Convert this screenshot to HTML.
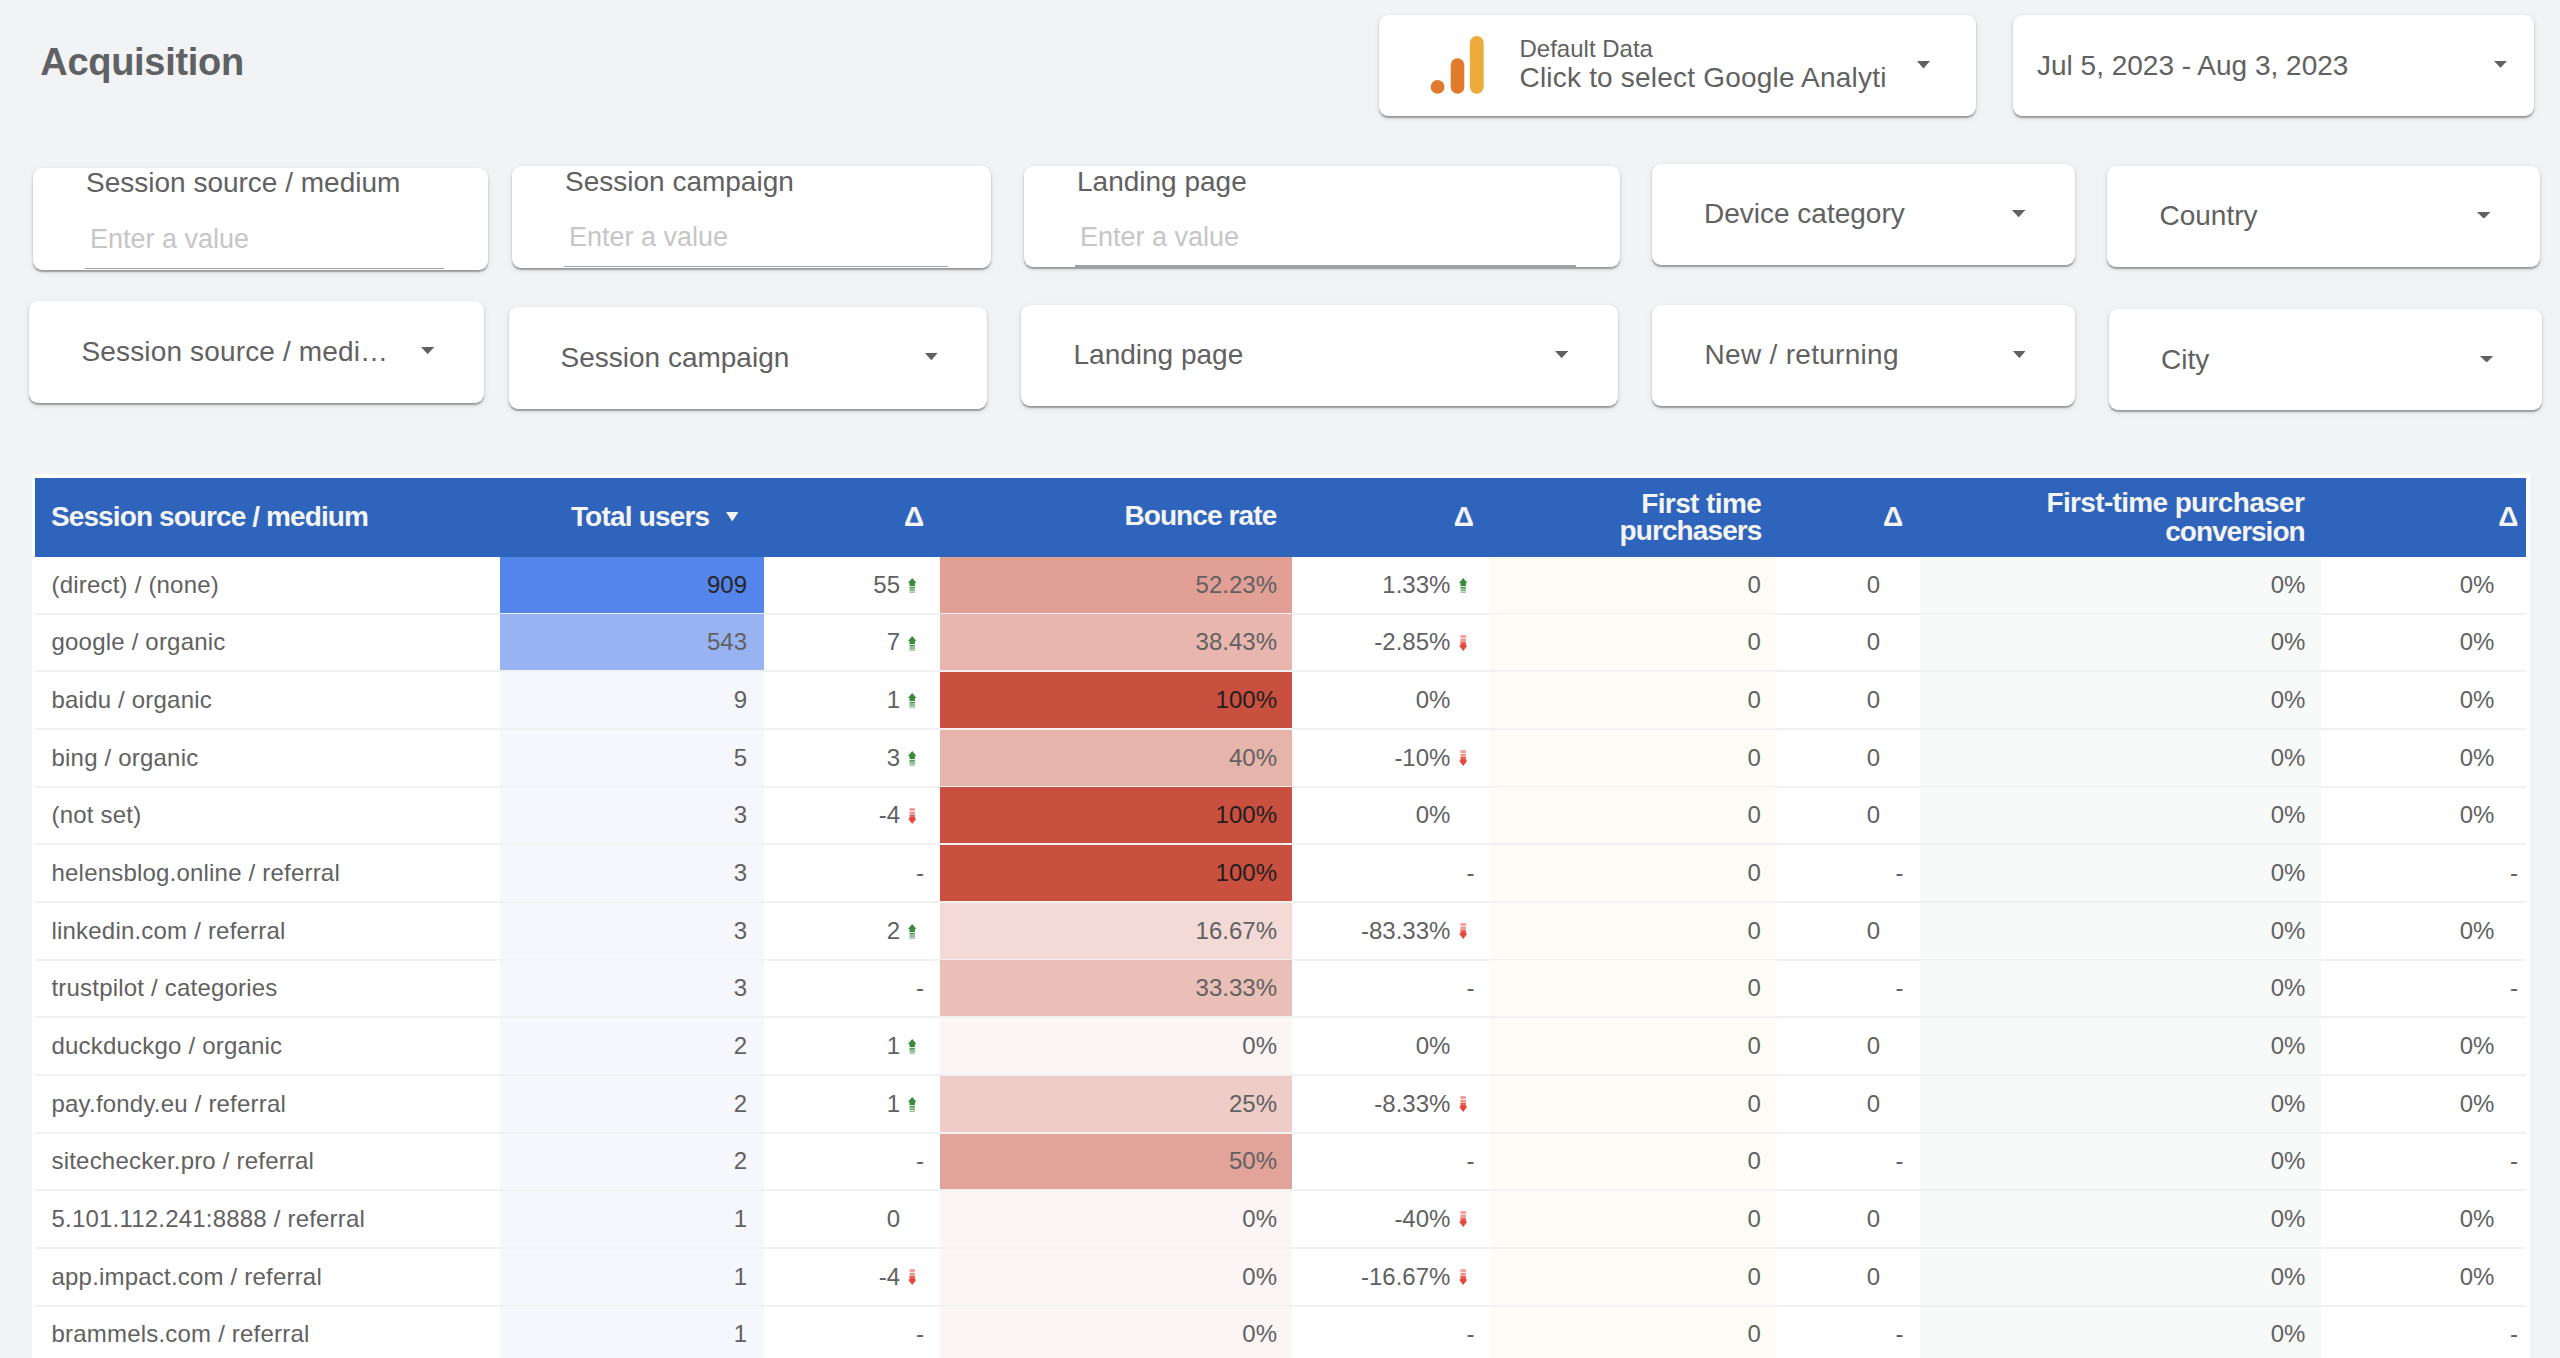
<!DOCTYPE html><html><head><meta charset="utf-8"><style>
html,body{margin:0;padding:0;width:2560px;height:1358px;overflow:hidden;background:#f2f3f5;}
body{position:relative;font-family:"Liberation Sans",sans-serif;}
.t{position:absolute;white-space:nowrap;}
.card{position:absolute;background:#fff;border-radius:9px;box-shadow:0 1.5px 1.5px rgba(0,0,0,0.32),0 2px 6px rgba(0,0,0,0.10);}
.ab{position:absolute;display:block;}
.ul{position:absolute;height:1.6px;background:#9ea2a6;}
.cell{position:absolute;}
</style></head><body>
<div class="t" style="left:40.3px;top:43.1px;font-size:38px;line-height:38px;font-weight:700;color:#5f6163;letter-spacing:-0.3px;">Acquisition</div>
<div class="card" style="left:1379px;top:15px;width:597px;height:101px;"></div>
<svg class="ab" style="left:1428px;top:34px" width="60" height="62" viewBox="0 0 60 62"><circle cx="9.6" cy="52.9" r="6.9" fill="#e07a2c"/><rect x="22.7" y="24.2" width="13.6" height="35.6" rx="6.8" fill="#e07a2c"/><rect x="41.8" y="2" width="13.9" height="57.8" rx="6.95" fill="#ecab3a"/></svg>
<div class="t" style="left:1519.5px;top:37.2px;font-size:24px;line-height:24px;font-weight:400;color:#616161;">Default Data</div>
<div class="t" style="left:1519.5px;top:64.3px;font-size:28px;line-height:28px;font-weight:400;color:#616161;letter-spacing:0.2px;">Click to select Google Analyti</div>
<svg class="ab" style="left:1917px;top:61px" width="13" height="7.5" viewBox="0 0 13 7.5"><polygon points="0,0 13,0 6.5,7.5" fill="#616161"/></svg>
<div class="card" style="left:2013px;top:15px;width:521px;height:101px;"></div>
<div class="t" style="left:2037.0px;top:51.6px;font-size:28px;line-height:28px;font-weight:400;color:#616161;">Jul 5, 2023 - Aug 3, 2023</div>
<svg class="ab" style="left:2494px;top:61.3px" width="13" height="6.700000000000003" viewBox="0 0 13 6.700000000000003"><polygon points="0,0 13,0 6.5,6.700000000000003" fill="#616161"/></svg>
<div class="card" style="left:33px;top:168px;width:455px;height:101.5px;"></div>
<div class="ul" style="left:85px;top:267.9px;width:359px"></div>
<div class="t" style="left:86.0px;top:169.3px;font-size:28px;line-height:28px;font-weight:400;color:#616161;">Session source / medium</div>
<div class="t" style="left:90.0px;top:226.1px;font-size:27px;line-height:27px;font-weight:400;color:#c6c6c6;">Enter a value</div>
<div class="card" style="left:512px;top:166px;width:479px;height:101.5px;"></div>
<div class="ul" style="left:564px;top:265.9px;width:384px"></div>
<div class="t" style="left:565.0px;top:167.5px;font-size:28px;line-height:28px;font-weight:400;color:#616161;">Session campaign</div>
<div class="t" style="left:569.0px;top:224.1px;font-size:27px;line-height:27px;font-weight:400;color:#c6c6c6;">Enter a value</div>
<div class="card" style="left:1023.5px;top:166px;width:596.0px;height:101px;"></div>
<div class="ul" style="left:1075px;top:265.4px;width:501px"></div>
<div class="t" style="left:1077.0px;top:167.6px;font-size:28px;line-height:28px;font-weight:400;color:#616161;">Landing page</div>
<div class="t" style="left:1080.0px;top:224.1px;font-size:27px;line-height:27px;font-weight:400;color:#c6c6c6;">Enter a value</div>
<div class="card" style="left:1651.5px;top:163.7px;width:423.5px;height:101.60000000000002px;"></div>
<div class="t" style="left:1704.0px;top:200.3px;font-size:28px;line-height:28px;font-weight:400;color:#616161;">Device category</div>
<svg class="ab" style="left:2012px;top:210px" width="13.299999999999955" height="7.300000000000011" viewBox="0 0 13.299999999999955 7.300000000000011"><polygon points="0,0 13.299999999999955,0 6.649999999999977,7.300000000000011" fill="#616161"/></svg>
<div class="card" style="left:2107px;top:165.5px;width:433.3000000000002px;height:101.5px;"></div>
<div class="t" style="left:2159.5px;top:201.9px;font-size:28px;line-height:28px;font-weight:400;color:#616161;">Country</div>
<svg class="ab" style="left:2477px;top:211.8px" width="13.599999999999909" height="6.699999999999989" viewBox="0 0 13.599999999999909 6.699999999999989"><polygon points="0,0 13.599999999999909,0 6.7999999999999545,6.699999999999989" fill="#616161"/></svg>
<div class="card" style="left:29px;top:301px;width:455.4px;height:101.60000000000002px;"></div>
<div class="t" style="left:81.5px;top:338.3px;font-size:28px;line-height:28px;font-weight:400;color:#616161;letter-spacing:0.15px;">Session source / medi…</div>
<svg class="ab" style="left:421.4px;top:347.4px" width="13.300000000000011" height="7.100000000000023" viewBox="0 0 13.300000000000011 7.100000000000023"><polygon points="0,0 13.300000000000011,0 6.650000000000006,7.100000000000023" fill="#616161"/></svg>
<div class="card" style="left:508.7px;top:307px;width:478.3px;height:101.69999999999999px;"></div>
<div class="t" style="left:560.5px;top:344.1px;font-size:28px;line-height:28px;font-weight:400;color:#616161;">Session campaign</div>
<svg class="ab" style="left:924.7px;top:353.4px" width="12.699999999999932" height="7.2000000000000455" viewBox="0 0 12.699999999999932 7.2000000000000455"><polygon points="0,0 12.699999999999932,0 6.349999999999966,7.2000000000000455" fill="#616161"/></svg>
<div class="card" style="left:1021.4px;top:305.4px;width:596.1999999999999px;height:101.0px;"></div>
<div class="t" style="left:1073.5px;top:341.3px;font-size:28px;line-height:28px;font-weight:400;color:#616161;">Landing page</div>
<svg class="ab" style="left:1554.7px;top:351.2px" width="13.200000000000045" height="7.199999999999989" viewBox="0 0 13.200000000000045 7.199999999999989"><polygon points="0,0 13.200000000000045,0 6.600000000000023,7.199999999999989" fill="#616161"/></svg>
<div class="card" style="left:1651.5px;top:304.8px;width:423.9000000000001px;height:101.59999999999997px;"></div>
<div class="t" style="left:1704.5px;top:341.3px;font-size:28px;line-height:28px;font-weight:400;color:#616161;letter-spacing:0.3px;">New / returning</div>
<svg class="ab" style="left:2012.5px;top:351.2px" width="12.700000000000045" height="7.199999999999989" viewBox="0 0 12.700000000000045 7.199999999999989"><polygon points="0,0 12.700000000000045,0 6.350000000000023,7.199999999999989" fill="#616161"/></svg>
<div class="card" style="left:2108.5px;top:309.3px;width:433.5px;height:101.0px;"></div>
<div class="t" style="left:2161.0px;top:345.8px;font-size:28px;line-height:28px;font-weight:400;color:#616161;">City</div>
<svg class="ab" style="left:2479.5px;top:355.5px" width="13.300000000000182" height="6.5" viewBox="0 0 13.300000000000182 6.5"><polygon points="0,0 13.300000000000182,0 6.650000000000091,6.5" fill="#616161"/></svg>
<div class="cell" style="left:32px;top:473.8px;width:2497.5px;height:884.2px;background:#fff"></div>
<div class="cell" style="left:35px;top:478px;width:2491px;height:78.79999999999995px;background:#2f64bd"></div>
<div class="t" style="left:51.0px;top:503.2px;font-size:28px;line-height:28px;font-weight:700;color:#f4f4f4;letter-spacing:-0.9px;">Session source / medium</div>
<div class="t" style="right:1850.6px;top:502.9px;font-size:28px;line-height:28px;font-weight:700;color:#f4f4f4;letter-spacing:-0.8px;">Total users</div>
<svg class="ab" style="left:725.8px;top:512px" width="12.5" height="9.399999999999977" viewBox="0 0 12.5 9.399999999999977"><polygon points="0,0 12.5,0 6.25,9.399999999999977" fill="#f4f4f4"/></svg>
<div class="t" style="right:1635.8px;top:502.9px;font-size:28px;line-height:28px;font-weight:700;color:#f4f4f4;">Δ</div>
<div class="t" style="right:1283.7px;top:502.1px;font-size:28px;line-height:28px;font-weight:700;color:#f4f4f4;letter-spacing:-0.9px;">Bounce rate</div>
<div class="t" style="right:1086.2px;top:502.9px;font-size:28px;line-height:28px;font-weight:700;color:#f4f4f4;">Δ</div>
<div class="t" style="right:798.8px;top:489.9px;font-size:28px;line-height:28px;font-weight:700;color:#f4f4f4;letter-spacing:-0.6px;">First time</div>
<div class="t" style="right:798.5px;top:517.0px;font-size:28px;line-height:28px;font-weight:700;color:#f4f4f4;letter-spacing:-0.9px;">purchasers</div>
<div class="t" style="right:656.8px;top:502.9px;font-size:28px;line-height:28px;font-weight:700;color:#f4f4f4;">Δ</div>
<div class="t" style="right:255.8px;top:489.4px;font-size:28px;line-height:28px;font-weight:700;color:#f4f4f4;letter-spacing:-0.65px;">First-time purchaser</div>
<div class="t" style="right:255.4px;top:517.8px;font-size:28px;line-height:28px;font-weight:700;color:#f4f4f4;letter-spacing:-1.0px;">conversion</div>
<div class="t" style="right:41.7px;top:502.9px;font-size:28px;line-height:28px;font-weight:700;color:#f4f4f4;">Δ</div>
<div class="cell" style="left:499.5px;top:556.80px;width:264.5px;height:57.67px;background:#5485ea"></div>
<div class="cell" style="left:939.6px;top:556.80px;width:352.9px;height:57.67px;background:#e19f96"></div>
<div class="cell" style="left:1490px;top:556.80px;width:287.4px;height:57.67px;background:#fcfbf5"></div>
<div class="cell" style="left:1920px;top:556.80px;width:401.0px;height:57.67px;background:#f8f9f9"></div>
<div class="cell" style="left:35px;top:612.67px;width:2491px;height:2px;background:#f1f1f1"></div>
<div class="t" style="left:51.5px;top:572.7px;font-size:24px;line-height:24px;font-weight:400;color:#616161;letter-spacing:0.2px;">(direct) / (none)</div>
<div class="t" style="right:1813.0px;top:572.7px;font-size:24px;line-height:24px;font-weight:400;color:#262626;">909</div>
<div class="t" style="right:1660.0px;top:572.7px;font-size:24px;line-height:24px;font-weight:400;color:#616161;">55</div>
<svg class="ab" style="left:908px;top:578.0px" width="8.4" height="15" viewBox="0 0 8.4 15"><polygon points="0,5 4.2,0 8.4,5 6.9,5 6.9,8 1.5,8 1.5,5" fill="#3a8a3e"/><rect x="1.5" y="8.8" width="5.4" height="1.8" fill="#3a8a3e" opacity="0.9"/><rect x="1.5" y="11.3" width="5.4" height="1.5" fill="#3a8a3e" opacity="0.8"/><rect x="1.5" y="13.5" width="5.4" height="1.3" fill="#3a8a3e" opacity="0.6"/></svg>
<div class="t" style="right:1283.0px;top:572.7px;font-size:24px;line-height:24px;font-weight:400;color:#616161;">52.23%</div>
<div class="t" style="right:1109.6px;top:572.7px;font-size:24px;line-height:24px;font-weight:400;color:#616161;">1.33%</div>
<svg class="ab" style="left:1458.5px;top:578.0px" width="8.4" height="15" viewBox="0 0 8.4 15"><polygon points="0,5 4.2,0 8.4,5 6.9,5 6.9,8 1.5,8 1.5,5" fill="#3a8a3e"/><rect x="1.5" y="8.8" width="5.4" height="1.8" fill="#3a8a3e" opacity="0.9"/><rect x="1.5" y="11.3" width="5.4" height="1.5" fill="#3a8a3e" opacity="0.8"/><rect x="1.5" y="13.5" width="5.4" height="1.3" fill="#3a8a3e" opacity="0.6"/></svg>
<div class="t" style="right:799.2px;top:572.7px;font-size:24px;line-height:24px;font-weight:400;color:#616161;">0</div>
<div class="t" style="right:680.0px;top:572.7px;font-size:24px;line-height:24px;font-weight:400;color:#616161;">0</div>
<div class="t" style="right:254.6px;top:572.7px;font-size:24px;line-height:24px;font-weight:400;color:#616161;">0%</div>
<div class="t" style="right:65.6px;top:572.7px;font-size:24px;line-height:24px;font-weight:400;color:#616161;">0%</div>
<div class="cell" style="left:499.5px;top:614.47px;width:264.5px;height:57.67px;background:#98b3f2"></div>
<div class="cell" style="left:939.6px;top:614.47px;width:352.9px;height:57.67px;background:#e8b6af"></div>
<div class="cell" style="left:1490px;top:614.47px;width:287.4px;height:57.67px;background:#fcfbf5"></div>
<div class="cell" style="left:1920px;top:614.47px;width:401.0px;height:57.67px;background:#f8f9f9"></div>
<div class="cell" style="left:35px;top:670.34px;width:2491px;height:2px;background:#f1f1f1"></div>
<div class="t" style="left:51.5px;top:630.4px;font-size:24px;line-height:24px;font-weight:400;color:#616161;letter-spacing:0.2px;">google / organic</div>
<div class="t" style="right:1813.0px;top:630.4px;font-size:24px;line-height:24px;font-weight:400;color:#616161;">543</div>
<div class="t" style="right:1660.0px;top:630.4px;font-size:24px;line-height:24px;font-weight:400;color:#616161;">7</div>
<svg class="ab" style="left:908px;top:635.67px" width="8.4" height="15" viewBox="0 0 8.4 15"><polygon points="0,5 4.2,0 8.4,5 6.9,5 6.9,8 1.5,8 1.5,5" fill="#3a8a3e"/><rect x="1.5" y="8.8" width="5.4" height="1.8" fill="#3a8a3e" opacity="0.9"/><rect x="1.5" y="11.3" width="5.4" height="1.5" fill="#3a8a3e" opacity="0.8"/><rect x="1.5" y="13.5" width="5.4" height="1.3" fill="#3a8a3e" opacity="0.6"/></svg>
<div class="t" style="right:1283.0px;top:630.4px;font-size:24px;line-height:24px;font-weight:400;color:#616161;">38.43%</div>
<div class="t" style="right:1109.6px;top:630.4px;font-size:24px;line-height:24px;font-weight:400;color:#616161;">-2.85%</div>
<svg class="ab" style="left:1458.5px;top:634.67px" width="8.4" height="16" viewBox="0 0 8.4 16"><rect x="1.5" y="0" width="5.4" height="3.2" fill="#e8453c" opacity="0.5"/><rect x="1.5" y="4.2" width="5.4" height="1.6" fill="#e8453c" opacity="0.75"/><rect x="1.5" y="6.6" width="5.4" height="2.2" fill="#e8453c" opacity="0.9"/><polygon points="1.5,8.8 6.9,8.8 6.9,10.6 8.4,10.6 4.2,16 0,10.6 1.5,10.6" fill="#e8453c"/></svg>
<div class="t" style="right:799.2px;top:630.4px;font-size:24px;line-height:24px;font-weight:400;color:#616161;">0</div>
<div class="t" style="right:680.0px;top:630.4px;font-size:24px;line-height:24px;font-weight:400;color:#616161;">0</div>
<div class="t" style="right:254.6px;top:630.4px;font-size:24px;line-height:24px;font-weight:400;color:#616161;">0%</div>
<div class="t" style="right:65.6px;top:630.4px;font-size:24px;line-height:24px;font-weight:400;color:#616161;">0%</div>
<div class="cell" style="left:499.5px;top:672.14px;width:264.5px;height:57.67px;background:#f5f7fd"></div>
<div class="cell" style="left:939.6px;top:672.14px;width:352.9px;height:57.67px;background:#c9503f"></div>
<div class="cell" style="left:1490px;top:672.14px;width:287.4px;height:57.67px;background:#fcfbf5"></div>
<div class="cell" style="left:1920px;top:672.14px;width:401.0px;height:57.67px;background:#f8f9f9"></div>
<div class="cell" style="left:35px;top:728.01px;width:2491px;height:2px;background:#f1f1f1"></div>
<div class="t" style="left:51.5px;top:688.0px;font-size:24px;line-height:24px;font-weight:400;color:#616161;letter-spacing:0.2px;">baidu / organic</div>
<div class="t" style="right:1813.0px;top:688.0px;font-size:24px;line-height:24px;font-weight:400;color:#616161;">9</div>
<div class="t" style="right:1660.0px;top:688.0px;font-size:24px;line-height:24px;font-weight:400;color:#616161;">1</div>
<svg class="ab" style="left:908px;top:693.34px" width="8.4" height="15" viewBox="0 0 8.4 15"><polygon points="0,5 4.2,0 8.4,5 6.9,5 6.9,8 1.5,8 1.5,5" fill="#3a8a3e"/><rect x="1.5" y="8.8" width="5.4" height="1.8" fill="#3a8a3e" opacity="0.9"/><rect x="1.5" y="11.3" width="5.4" height="1.5" fill="#3a8a3e" opacity="0.8"/><rect x="1.5" y="13.5" width="5.4" height="1.3" fill="#3a8a3e" opacity="0.6"/></svg>
<div class="t" style="right:1283.0px;top:688.0px;font-size:24px;line-height:24px;font-weight:400;color:#1f1f1f;">100%</div>
<div class="t" style="right:1109.6px;top:688.0px;font-size:24px;line-height:24px;font-weight:400;color:#616161;">0%</div>
<div class="t" style="right:799.2px;top:688.0px;font-size:24px;line-height:24px;font-weight:400;color:#616161;">0</div>
<div class="t" style="right:680.0px;top:688.0px;font-size:24px;line-height:24px;font-weight:400;color:#616161;">0</div>
<div class="t" style="right:254.6px;top:688.0px;font-size:24px;line-height:24px;font-weight:400;color:#616161;">0%</div>
<div class="t" style="right:65.6px;top:688.0px;font-size:24px;line-height:24px;font-weight:400;color:#616161;">0%</div>
<div class="cell" style="left:499.5px;top:729.81px;width:264.5px;height:57.67px;background:#f5f7fd"></div>
<div class="cell" style="left:939.6px;top:729.81px;width:352.9px;height:57.67px;background:#e7b4ac"></div>
<div class="cell" style="left:1490px;top:729.81px;width:287.4px;height:57.67px;background:#fcfbf5"></div>
<div class="cell" style="left:1920px;top:729.81px;width:401.0px;height:57.67px;background:#f8f9f9"></div>
<div class="cell" style="left:35px;top:785.68px;width:2491px;height:2px;background:#f1f1f1"></div>
<div class="t" style="left:51.5px;top:745.7px;font-size:24px;line-height:24px;font-weight:400;color:#616161;letter-spacing:0.2px;">bing / organic</div>
<div class="t" style="right:1813.0px;top:745.7px;font-size:24px;line-height:24px;font-weight:400;color:#616161;">5</div>
<div class="t" style="right:1660.0px;top:745.7px;font-size:24px;line-height:24px;font-weight:400;color:#616161;">3</div>
<svg class="ab" style="left:908px;top:751.01px" width="8.4" height="15" viewBox="0 0 8.4 15"><polygon points="0,5 4.2,0 8.4,5 6.9,5 6.9,8 1.5,8 1.5,5" fill="#3a8a3e"/><rect x="1.5" y="8.8" width="5.4" height="1.8" fill="#3a8a3e" opacity="0.9"/><rect x="1.5" y="11.3" width="5.4" height="1.5" fill="#3a8a3e" opacity="0.8"/><rect x="1.5" y="13.5" width="5.4" height="1.3" fill="#3a8a3e" opacity="0.6"/></svg>
<div class="t" style="right:1283.0px;top:745.7px;font-size:24px;line-height:24px;font-weight:400;color:#616161;">40%</div>
<div class="t" style="right:1109.6px;top:745.7px;font-size:24px;line-height:24px;font-weight:400;color:#616161;">-10%</div>
<svg class="ab" style="left:1458.5px;top:750.01px" width="8.4" height="16" viewBox="0 0 8.4 16"><rect x="1.5" y="0" width="5.4" height="3.2" fill="#e8453c" opacity="0.5"/><rect x="1.5" y="4.2" width="5.4" height="1.6" fill="#e8453c" opacity="0.75"/><rect x="1.5" y="6.6" width="5.4" height="2.2" fill="#e8453c" opacity="0.9"/><polygon points="1.5,8.8 6.9,8.8 6.9,10.6 8.4,10.6 4.2,16 0,10.6 1.5,10.6" fill="#e8453c"/></svg>
<div class="t" style="right:799.2px;top:745.7px;font-size:24px;line-height:24px;font-weight:400;color:#616161;">0</div>
<div class="t" style="right:680.0px;top:745.7px;font-size:24px;line-height:24px;font-weight:400;color:#616161;">0</div>
<div class="t" style="right:254.6px;top:745.7px;font-size:24px;line-height:24px;font-weight:400;color:#616161;">0%</div>
<div class="t" style="right:65.6px;top:745.7px;font-size:24px;line-height:24px;font-weight:400;color:#616161;">0%</div>
<div class="cell" style="left:499.5px;top:787.48px;width:264.5px;height:57.67px;background:#f5f7fd"></div>
<div class="cell" style="left:939.6px;top:787.48px;width:352.9px;height:57.67px;background:#c9503f"></div>
<div class="cell" style="left:1490px;top:787.48px;width:287.4px;height:57.67px;background:#fcfbf5"></div>
<div class="cell" style="left:1920px;top:787.48px;width:401.0px;height:57.67px;background:#f8f9f9"></div>
<div class="cell" style="left:35px;top:843.35px;width:2491px;height:2px;background:#f1f1f1"></div>
<div class="t" style="left:51.5px;top:803.4px;font-size:24px;line-height:24px;font-weight:400;color:#616161;letter-spacing:0.2px;">(not set)</div>
<div class="t" style="right:1813.0px;top:803.4px;font-size:24px;line-height:24px;font-weight:400;color:#616161;">3</div>
<div class="t" style="right:1660.0px;top:803.4px;font-size:24px;line-height:24px;font-weight:400;color:#616161;">-4</div>
<svg class="ab" style="left:908px;top:807.6800000000001px" width="8.4" height="16" viewBox="0 0 8.4 16"><rect x="1.5" y="0" width="5.4" height="3.2" fill="#e8453c" opacity="0.5"/><rect x="1.5" y="4.2" width="5.4" height="1.6" fill="#e8453c" opacity="0.75"/><rect x="1.5" y="6.6" width="5.4" height="2.2" fill="#e8453c" opacity="0.9"/><polygon points="1.5,8.8 6.9,8.8 6.9,10.6 8.4,10.6 4.2,16 0,10.6 1.5,10.6" fill="#e8453c"/></svg>
<div class="t" style="right:1283.0px;top:803.4px;font-size:24px;line-height:24px;font-weight:400;color:#1f1f1f;">100%</div>
<div class="t" style="right:1109.6px;top:803.4px;font-size:24px;line-height:24px;font-weight:400;color:#616161;">0%</div>
<div class="t" style="right:799.2px;top:803.4px;font-size:24px;line-height:24px;font-weight:400;color:#616161;">0</div>
<div class="t" style="right:680.0px;top:803.4px;font-size:24px;line-height:24px;font-weight:400;color:#616161;">0</div>
<div class="t" style="right:254.6px;top:803.4px;font-size:24px;line-height:24px;font-weight:400;color:#616161;">0%</div>
<div class="t" style="right:65.6px;top:803.4px;font-size:24px;line-height:24px;font-weight:400;color:#616161;">0%</div>
<div class="cell" style="left:499.5px;top:845.15px;width:264.5px;height:57.67px;background:#f5f7fd"></div>
<div class="cell" style="left:939.6px;top:845.15px;width:352.9px;height:57.67px;background:#c9503f"></div>
<div class="cell" style="left:1490px;top:845.15px;width:287.4px;height:57.67px;background:#fcfbf5"></div>
<div class="cell" style="left:1920px;top:845.15px;width:401.0px;height:57.67px;background:#f8f9f9"></div>
<div class="cell" style="left:35px;top:901.02px;width:2491px;height:2px;background:#f1f1f1"></div>
<div class="t" style="left:51.5px;top:861.0px;font-size:24px;line-height:24px;font-weight:400;color:#616161;letter-spacing:0.2px;">helensblog.online / referral</div>
<div class="t" style="right:1813.0px;top:861.0px;font-size:24px;line-height:24px;font-weight:400;color:#616161;">3</div>
<div class="t" style="right:1636.0px;top:861.0px;font-size:24px;line-height:24px;font-weight:400;color:#616161;">-</div>
<div class="t" style="right:1283.0px;top:861.0px;font-size:24px;line-height:24px;font-weight:400;color:#1f1f1f;">100%</div>
<div class="t" style="right:1085.4px;top:861.0px;font-size:24px;line-height:24px;font-weight:400;color:#616161;">-</div>
<div class="t" style="right:799.2px;top:861.0px;font-size:24px;line-height:24px;font-weight:400;color:#616161;">0</div>
<div class="t" style="right:656.6px;top:861.0px;font-size:24px;line-height:24px;font-weight:400;color:#616161;">-</div>
<div class="t" style="right:254.6px;top:861.0px;font-size:24px;line-height:24px;font-weight:400;color:#616161;">0%</div>
<div class="t" style="right:42.0px;top:861.0px;font-size:24px;line-height:24px;font-weight:400;color:#616161;">-</div>
<div class="cell" style="left:499.5px;top:902.82px;width:264.5px;height:57.67px;background:#f5f7fd"></div>
<div class="cell" style="left:939.6px;top:902.82px;width:352.9px;height:57.67px;background:#f3dad7"></div>
<div class="cell" style="left:1490px;top:902.82px;width:287.4px;height:57.67px;background:#fcfbf5"></div>
<div class="cell" style="left:1920px;top:902.82px;width:401.0px;height:57.67px;background:#f8f9f9"></div>
<div class="cell" style="left:35px;top:958.69px;width:2491px;height:2px;background:#f1f1f1"></div>
<div class="t" style="left:51.5px;top:918.7px;font-size:24px;line-height:24px;font-weight:400;color:#616161;letter-spacing:0.2px;">linkedin.com / referral</div>
<div class="t" style="right:1813.0px;top:918.7px;font-size:24px;line-height:24px;font-weight:400;color:#616161;">3</div>
<div class="t" style="right:1660.0px;top:918.7px;font-size:24px;line-height:24px;font-weight:400;color:#616161;">2</div>
<svg class="ab" style="left:908px;top:924.02px" width="8.4" height="15" viewBox="0 0 8.4 15"><polygon points="0,5 4.2,0 8.4,5 6.9,5 6.9,8 1.5,8 1.5,5" fill="#3a8a3e"/><rect x="1.5" y="8.8" width="5.4" height="1.8" fill="#3a8a3e" opacity="0.9"/><rect x="1.5" y="11.3" width="5.4" height="1.5" fill="#3a8a3e" opacity="0.8"/><rect x="1.5" y="13.5" width="5.4" height="1.3" fill="#3a8a3e" opacity="0.6"/></svg>
<div class="t" style="right:1283.0px;top:918.7px;font-size:24px;line-height:24px;font-weight:400;color:#616161;">16.67%</div>
<div class="t" style="right:1109.6px;top:918.7px;font-size:24px;line-height:24px;font-weight:400;color:#616161;">-83.33%</div>
<svg class="ab" style="left:1458.5px;top:923.02px" width="8.4" height="16" viewBox="0 0 8.4 16"><rect x="1.5" y="0" width="5.4" height="3.2" fill="#e8453c" opacity="0.5"/><rect x="1.5" y="4.2" width="5.4" height="1.6" fill="#e8453c" opacity="0.75"/><rect x="1.5" y="6.6" width="5.4" height="2.2" fill="#e8453c" opacity="0.9"/><polygon points="1.5,8.8 6.9,8.8 6.9,10.6 8.4,10.6 4.2,16 0,10.6 1.5,10.6" fill="#e8453c"/></svg>
<div class="t" style="right:799.2px;top:918.7px;font-size:24px;line-height:24px;font-weight:400;color:#616161;">0</div>
<div class="t" style="right:680.0px;top:918.7px;font-size:24px;line-height:24px;font-weight:400;color:#616161;">0</div>
<div class="t" style="right:254.6px;top:918.7px;font-size:24px;line-height:24px;font-weight:400;color:#616161;">0%</div>
<div class="t" style="right:65.6px;top:918.7px;font-size:24px;line-height:24px;font-weight:400;color:#616161;">0%</div>
<div class="cell" style="left:499.5px;top:960.49px;width:264.5px;height:57.67px;background:#f5f7fd"></div>
<div class="cell" style="left:939.6px;top:960.49px;width:352.9px;height:57.67px;background:#eabfb8"></div>
<div class="cell" style="left:1490px;top:960.49px;width:287.4px;height:57.67px;background:#fcfbf5"></div>
<div class="cell" style="left:1920px;top:960.49px;width:401.0px;height:57.67px;background:#f8f9f9"></div>
<div class="cell" style="left:35px;top:1016.36px;width:2491px;height:2px;background:#f1f1f1"></div>
<div class="t" style="left:51.5px;top:976.4px;font-size:24px;line-height:24px;font-weight:400;color:#616161;letter-spacing:0.2px;">trustpilot / categories</div>
<div class="t" style="right:1813.0px;top:976.4px;font-size:24px;line-height:24px;font-weight:400;color:#616161;">3</div>
<div class="t" style="right:1636.0px;top:976.4px;font-size:24px;line-height:24px;font-weight:400;color:#616161;">-</div>
<div class="t" style="right:1283.0px;top:976.4px;font-size:24px;line-height:24px;font-weight:400;color:#616161;">33.33%</div>
<div class="t" style="right:1085.4px;top:976.4px;font-size:24px;line-height:24px;font-weight:400;color:#616161;">-</div>
<div class="t" style="right:799.2px;top:976.4px;font-size:24px;line-height:24px;font-weight:400;color:#616161;">0</div>
<div class="t" style="right:656.6px;top:976.4px;font-size:24px;line-height:24px;font-weight:400;color:#616161;">-</div>
<div class="t" style="right:254.6px;top:976.4px;font-size:24px;line-height:24px;font-weight:400;color:#616161;">0%</div>
<div class="t" style="right:42.0px;top:976.4px;font-size:24px;line-height:24px;font-weight:400;color:#616161;">-</div>
<div class="cell" style="left:499.5px;top:1018.16px;width:264.5px;height:57.67px;background:#f5f7fd"></div>
<div class="cell" style="left:939.6px;top:1018.16px;width:352.9px;height:57.67px;background:#fbf6f5"></div>
<div class="cell" style="left:1490px;top:1018.16px;width:287.4px;height:57.67px;background:#fcfbf5"></div>
<div class="cell" style="left:1920px;top:1018.16px;width:401.0px;height:57.67px;background:#f8f9f9"></div>
<div class="cell" style="left:35px;top:1074.03px;width:2491px;height:2px;background:#f1f1f1"></div>
<div class="t" style="left:51.5px;top:1034.0px;font-size:24px;line-height:24px;font-weight:400;color:#616161;letter-spacing:0.2px;">duckduckgo / organic</div>
<div class="t" style="right:1813.0px;top:1034.0px;font-size:24px;line-height:24px;font-weight:400;color:#616161;">2</div>
<div class="t" style="right:1660.0px;top:1034.0px;font-size:24px;line-height:24px;font-weight:400;color:#616161;">1</div>
<svg class="ab" style="left:908px;top:1039.3600000000001px" width="8.4" height="15" viewBox="0 0 8.4 15"><polygon points="0,5 4.2,0 8.4,5 6.9,5 6.9,8 1.5,8 1.5,5" fill="#3a8a3e"/><rect x="1.5" y="8.8" width="5.4" height="1.8" fill="#3a8a3e" opacity="0.9"/><rect x="1.5" y="11.3" width="5.4" height="1.5" fill="#3a8a3e" opacity="0.8"/><rect x="1.5" y="13.5" width="5.4" height="1.3" fill="#3a8a3e" opacity="0.6"/></svg>
<div class="t" style="right:1283.0px;top:1034.0px;font-size:24px;line-height:24px;font-weight:400;color:#616161;">0%</div>
<div class="t" style="right:1109.6px;top:1034.0px;font-size:24px;line-height:24px;font-weight:400;color:#616161;">0%</div>
<div class="t" style="right:799.2px;top:1034.0px;font-size:24px;line-height:24px;font-weight:400;color:#616161;">0</div>
<div class="t" style="right:680.0px;top:1034.0px;font-size:24px;line-height:24px;font-weight:400;color:#616161;">0</div>
<div class="t" style="right:254.6px;top:1034.0px;font-size:24px;line-height:24px;font-weight:400;color:#616161;">0%</div>
<div class="t" style="right:65.6px;top:1034.0px;font-size:24px;line-height:24px;font-weight:400;color:#616161;">0%</div>
<div class="cell" style="left:499.5px;top:1075.83px;width:264.5px;height:57.67px;background:#f5f7fd"></div>
<div class="cell" style="left:939.6px;top:1075.83px;width:352.9px;height:57.67px;background:#eeccc8"></div>
<div class="cell" style="left:1490px;top:1075.83px;width:287.4px;height:57.67px;background:#fcfbf5"></div>
<div class="cell" style="left:1920px;top:1075.83px;width:401.0px;height:57.67px;background:#f8f9f9"></div>
<div class="cell" style="left:35px;top:1131.70px;width:2491px;height:2px;background:#f1f1f1"></div>
<div class="t" style="left:51.5px;top:1091.7px;font-size:24px;line-height:24px;font-weight:400;color:#616161;letter-spacing:0.2px;">pay.fondy.eu / referral</div>
<div class="t" style="right:1813.0px;top:1091.7px;font-size:24px;line-height:24px;font-weight:400;color:#616161;">2</div>
<div class="t" style="right:1660.0px;top:1091.7px;font-size:24px;line-height:24px;font-weight:400;color:#616161;">1</div>
<svg class="ab" style="left:908px;top:1097.03px" width="8.4" height="15" viewBox="0 0 8.4 15"><polygon points="0,5 4.2,0 8.4,5 6.9,5 6.9,8 1.5,8 1.5,5" fill="#3a8a3e"/><rect x="1.5" y="8.8" width="5.4" height="1.8" fill="#3a8a3e" opacity="0.9"/><rect x="1.5" y="11.3" width="5.4" height="1.5" fill="#3a8a3e" opacity="0.8"/><rect x="1.5" y="13.5" width="5.4" height="1.3" fill="#3a8a3e" opacity="0.6"/></svg>
<div class="t" style="right:1283.0px;top:1091.7px;font-size:24px;line-height:24px;font-weight:400;color:#616161;">25%</div>
<div class="t" style="right:1109.6px;top:1091.7px;font-size:24px;line-height:24px;font-weight:400;color:#616161;">-8.33%</div>
<svg class="ab" style="left:1458.5px;top:1096.03px" width="8.4" height="16" viewBox="0 0 8.4 16"><rect x="1.5" y="0" width="5.4" height="3.2" fill="#e8453c" opacity="0.5"/><rect x="1.5" y="4.2" width="5.4" height="1.6" fill="#e8453c" opacity="0.75"/><rect x="1.5" y="6.6" width="5.4" height="2.2" fill="#e8453c" opacity="0.9"/><polygon points="1.5,8.8 6.9,8.8 6.9,10.6 8.4,10.6 4.2,16 0,10.6 1.5,10.6" fill="#e8453c"/></svg>
<div class="t" style="right:799.2px;top:1091.7px;font-size:24px;line-height:24px;font-weight:400;color:#616161;">0</div>
<div class="t" style="right:680.0px;top:1091.7px;font-size:24px;line-height:24px;font-weight:400;color:#616161;">0</div>
<div class="t" style="right:254.6px;top:1091.7px;font-size:24px;line-height:24px;font-weight:400;color:#616161;">0%</div>
<div class="t" style="right:65.6px;top:1091.7px;font-size:24px;line-height:24px;font-weight:400;color:#616161;">0%</div>
<div class="cell" style="left:499.5px;top:1133.50px;width:264.5px;height:57.67px;background:#f5f7fd"></div>
<div class="cell" style="left:939.6px;top:1133.50px;width:352.9px;height:57.67px;background:#e2a39a"></div>
<div class="cell" style="left:1490px;top:1133.50px;width:287.4px;height:57.67px;background:#fcfbf5"></div>
<div class="cell" style="left:1920px;top:1133.50px;width:401.0px;height:57.67px;background:#f8f9f9"></div>
<div class="cell" style="left:35px;top:1189.37px;width:2491px;height:2px;background:#f1f1f1"></div>
<div class="t" style="left:51.5px;top:1149.4px;font-size:24px;line-height:24px;font-weight:400;color:#616161;letter-spacing:0.2px;">sitechecker.pro / referral</div>
<div class="t" style="right:1813.0px;top:1149.4px;font-size:24px;line-height:24px;font-weight:400;color:#616161;">2</div>
<div class="t" style="right:1636.0px;top:1149.4px;font-size:24px;line-height:24px;font-weight:400;color:#616161;">-</div>
<div class="t" style="right:1283.0px;top:1149.4px;font-size:24px;line-height:24px;font-weight:400;color:#616161;">50%</div>
<div class="t" style="right:1085.4px;top:1149.4px;font-size:24px;line-height:24px;font-weight:400;color:#616161;">-</div>
<div class="t" style="right:799.2px;top:1149.4px;font-size:24px;line-height:24px;font-weight:400;color:#616161;">0</div>
<div class="t" style="right:656.6px;top:1149.4px;font-size:24px;line-height:24px;font-weight:400;color:#616161;">-</div>
<div class="t" style="right:254.6px;top:1149.4px;font-size:24px;line-height:24px;font-weight:400;color:#616161;">0%</div>
<div class="t" style="right:42.0px;top:1149.4px;font-size:24px;line-height:24px;font-weight:400;color:#616161;">-</div>
<div class="cell" style="left:499.5px;top:1191.17px;width:264.5px;height:57.67px;background:#f5f7fd"></div>
<div class="cell" style="left:939.6px;top:1191.17px;width:352.9px;height:57.67px;background:#fbf6f5"></div>
<div class="cell" style="left:1490px;top:1191.17px;width:287.4px;height:57.67px;background:#fcfbf5"></div>
<div class="cell" style="left:1920px;top:1191.17px;width:401.0px;height:57.67px;background:#f8f9f9"></div>
<div class="cell" style="left:35px;top:1247.04px;width:2491px;height:2px;background:#f1f1f1"></div>
<div class="t" style="left:51.5px;top:1207.1px;font-size:24px;line-height:24px;font-weight:400;color:#616161;letter-spacing:0.2px;">5.101.112.241:8888 / referral</div>
<div class="t" style="right:1813.0px;top:1207.1px;font-size:24px;line-height:24px;font-weight:400;color:#616161;">1</div>
<div class="t" style="right:1660.0px;top:1207.1px;font-size:24px;line-height:24px;font-weight:400;color:#616161;">0</div>
<div class="t" style="right:1283.0px;top:1207.1px;font-size:24px;line-height:24px;font-weight:400;color:#616161;">0%</div>
<div class="t" style="right:1109.6px;top:1207.1px;font-size:24px;line-height:24px;font-weight:400;color:#616161;">-40%</div>
<svg class="ab" style="left:1458.5px;top:1211.37px" width="8.4" height="16" viewBox="0 0 8.4 16"><rect x="1.5" y="0" width="5.4" height="3.2" fill="#e8453c" opacity="0.5"/><rect x="1.5" y="4.2" width="5.4" height="1.6" fill="#e8453c" opacity="0.75"/><rect x="1.5" y="6.6" width="5.4" height="2.2" fill="#e8453c" opacity="0.9"/><polygon points="1.5,8.8 6.9,8.8 6.9,10.6 8.4,10.6 4.2,16 0,10.6 1.5,10.6" fill="#e8453c"/></svg>
<div class="t" style="right:799.2px;top:1207.1px;font-size:24px;line-height:24px;font-weight:400;color:#616161;">0</div>
<div class="t" style="right:680.0px;top:1207.1px;font-size:24px;line-height:24px;font-weight:400;color:#616161;">0</div>
<div class="t" style="right:254.6px;top:1207.1px;font-size:24px;line-height:24px;font-weight:400;color:#616161;">0%</div>
<div class="t" style="right:65.6px;top:1207.1px;font-size:24px;line-height:24px;font-weight:400;color:#616161;">0%</div>
<div class="cell" style="left:499.5px;top:1248.84px;width:264.5px;height:57.67px;background:#f5f7fd"></div>
<div class="cell" style="left:939.6px;top:1248.84px;width:352.9px;height:57.67px;background:#fbf6f5"></div>
<div class="cell" style="left:1490px;top:1248.84px;width:287.4px;height:57.67px;background:#fcfbf5"></div>
<div class="cell" style="left:1920px;top:1248.84px;width:401.0px;height:57.67px;background:#f8f9f9"></div>
<div class="cell" style="left:35px;top:1304.71px;width:2491px;height:2px;background:#f1f1f1"></div>
<div class="t" style="left:51.5px;top:1264.7px;font-size:24px;line-height:24px;font-weight:400;color:#616161;letter-spacing:0.2px;">app.impact.com / referral</div>
<div class="t" style="right:1813.0px;top:1264.7px;font-size:24px;line-height:24px;font-weight:400;color:#616161;">1</div>
<div class="t" style="right:1660.0px;top:1264.7px;font-size:24px;line-height:24px;font-weight:400;color:#616161;">-4</div>
<svg class="ab" style="left:908px;top:1269.04px" width="8.4" height="16" viewBox="0 0 8.4 16"><rect x="1.5" y="0" width="5.4" height="3.2" fill="#e8453c" opacity="0.5"/><rect x="1.5" y="4.2" width="5.4" height="1.6" fill="#e8453c" opacity="0.75"/><rect x="1.5" y="6.6" width="5.4" height="2.2" fill="#e8453c" opacity="0.9"/><polygon points="1.5,8.8 6.9,8.8 6.9,10.6 8.4,10.6 4.2,16 0,10.6 1.5,10.6" fill="#e8453c"/></svg>
<div class="t" style="right:1283.0px;top:1264.7px;font-size:24px;line-height:24px;font-weight:400;color:#616161;">0%</div>
<div class="t" style="right:1109.6px;top:1264.7px;font-size:24px;line-height:24px;font-weight:400;color:#616161;">-16.67%</div>
<svg class="ab" style="left:1458.5px;top:1269.04px" width="8.4" height="16" viewBox="0 0 8.4 16"><rect x="1.5" y="0" width="5.4" height="3.2" fill="#e8453c" opacity="0.5"/><rect x="1.5" y="4.2" width="5.4" height="1.6" fill="#e8453c" opacity="0.75"/><rect x="1.5" y="6.6" width="5.4" height="2.2" fill="#e8453c" opacity="0.9"/><polygon points="1.5,8.8 6.9,8.8 6.9,10.6 8.4,10.6 4.2,16 0,10.6 1.5,10.6" fill="#e8453c"/></svg>
<div class="t" style="right:799.2px;top:1264.7px;font-size:24px;line-height:24px;font-weight:400;color:#616161;">0</div>
<div class="t" style="right:680.0px;top:1264.7px;font-size:24px;line-height:24px;font-weight:400;color:#616161;">0</div>
<div class="t" style="right:254.6px;top:1264.7px;font-size:24px;line-height:24px;font-weight:400;color:#616161;">0%</div>
<div class="t" style="right:65.6px;top:1264.7px;font-size:24px;line-height:24px;font-weight:400;color:#616161;">0%</div>
<div class="cell" style="left:499.5px;top:1306.51px;width:264.5px;height:57.67px;background:#f5f7fd"></div>
<div class="cell" style="left:939.6px;top:1306.51px;width:352.9px;height:57.67px;background:#fbf6f5"></div>
<div class="cell" style="left:1490px;top:1306.51px;width:287.4px;height:57.67px;background:#fcfbf5"></div>
<div class="cell" style="left:1920px;top:1306.51px;width:401.0px;height:57.67px;background:#f8f9f9"></div>
<div class="cell" style="left:35px;top:1362.38px;width:2491px;height:2px;background:#f1f1f1"></div>
<div class="t" style="left:51.5px;top:1322.4px;font-size:24px;line-height:24px;font-weight:400;color:#616161;letter-spacing:0.2px;">brammels.com / referral</div>
<div class="t" style="right:1813.0px;top:1322.4px;font-size:24px;line-height:24px;font-weight:400;color:#616161;">1</div>
<div class="t" style="right:1636.0px;top:1322.4px;font-size:24px;line-height:24px;font-weight:400;color:#616161;">-</div>
<div class="t" style="right:1283.0px;top:1322.4px;font-size:24px;line-height:24px;font-weight:400;color:#616161;">0%</div>
<div class="t" style="right:1085.4px;top:1322.4px;font-size:24px;line-height:24px;font-weight:400;color:#616161;">-</div>
<div class="t" style="right:799.2px;top:1322.4px;font-size:24px;line-height:24px;font-weight:400;color:#616161;">0</div>
<div class="t" style="right:656.6px;top:1322.4px;font-size:24px;line-height:24px;font-weight:400;color:#616161;">-</div>
<div class="t" style="right:254.6px;top:1322.4px;font-size:24px;line-height:24px;font-weight:400;color:#616161;">0%</div>
<div class="t" style="right:42.0px;top:1322.4px;font-size:24px;line-height:24px;font-weight:400;color:#616161;">-</div>
</body></html>
